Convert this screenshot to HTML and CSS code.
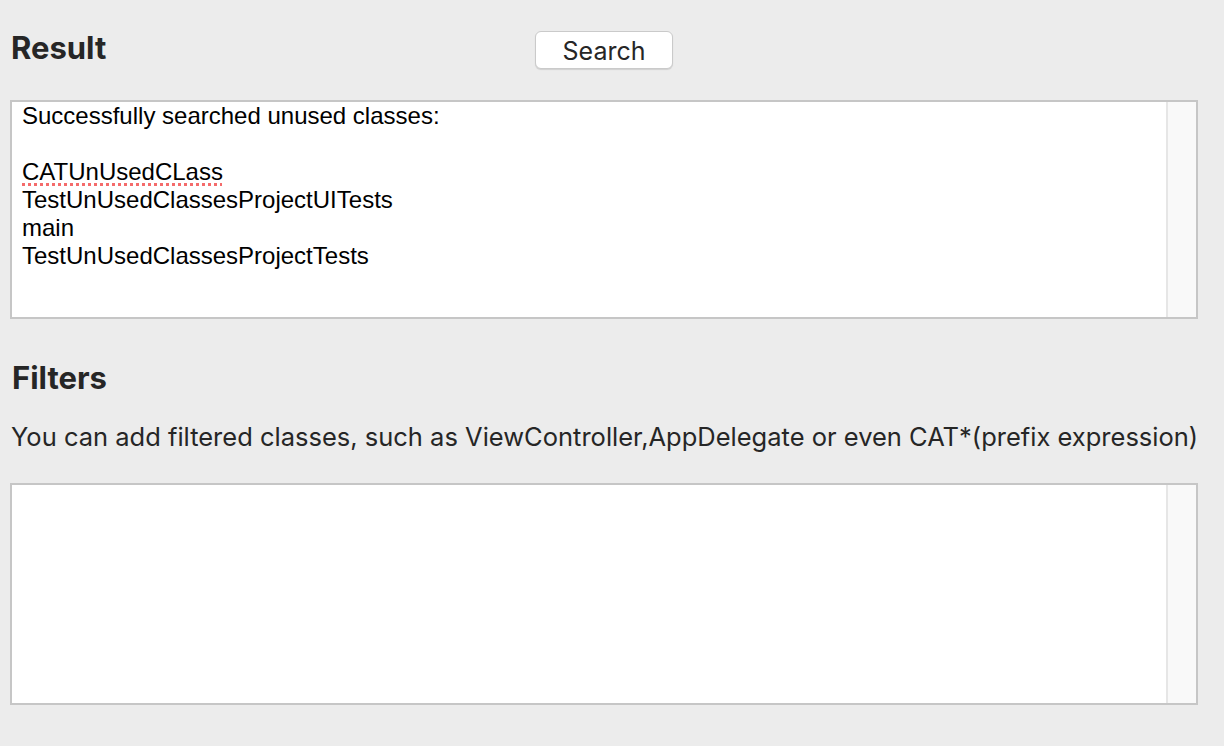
FILE: index.html
```html
<!DOCTYPE html>
<html>
<head>
<meta charset="utf-8">
<link rel="stylesheet" href="styles.css">
</head>
<body>
<div class="page">
  <div class="header">
    <h2 class="title">Result</h2>
    <button class="btn">Search</button>
  </div>
  <div class="box box-result">
    <div class="box-text">Successfully searched unused classes:<br><br><span class="misspelled">CATUnUsedCLass</span><br>TestUnUsedClassesProjectUITests<br>main<br>TestUnUsedClassesProjectTests</div>
    <div class="scroll"></div>
  </div>
  <h2 class="title title-filters">Filters</h2>
  <p class="desc">You can add filtered classes, such as ViewController,AppDelegate or even CAT*(prefix expression)</p>
  <div class="box box-filter">
    <div class="box-text"></div>
    <div class="scroll"></div>
  </div>
</div>
</body>
</html>
```

FILE: styles.css
```css
html, body {
  margin: 0;
  padding: 0;
  background: #ececec;
}

body {
  font-family: Inter, "Noto Sans", sans-serif;
  color: #262626;
}

.page {
  width: 1188px;
  margin-left: 10px;
}

.header {
  display: grid;
  grid-template-columns: 524px 138px;
  height: 100px;
  box-sizing: border-box;
  padding-top: 28px;
  padding-left: 1px;
  align-items: start;
}

.title {
  margin: 0;
  font-weight: 700;
  font-size: 31px;
  line-height: 40px;
  color: #262626;
}

.btn {
  margin-top: 3px;
  height: 38px;
  border: 1px solid #cacaca;
  border-radius: 6px;
  background: #ffffff;
  box-shadow: 0 1px 1px rgba(0, 0, 0, 0.12);
  font-family: Inter, "Noto Sans", sans-serif;
  font-size: 25px;
  line-height: 36px;
  padding: 1px 0 0 0;
  color: #262626;
}

.box {
  display: flex;
  box-sizing: border-box;
  border: 2px solid #c6c6c6;
  background: #ffffff;
}

.box-result {
  height: 219px;
}

.box-filter {
  height: 222px;
  margin-top: 30px;
}

.box-text {
  flex: 1;
  padding-left: 10px;
  font-family: "Liberation Sans", Arial, sans-serif;
  font-size: 24px;
  line-height: 28px;
  color: #000000;
}

.misspelled {
  text-decoration-line: underline;
  text-decoration-style: dotted;
  text-decoration-color: #f46b6b;
  text-decoration-thickness: 3px;
  text-underline-offset: 3px;
}

.scroll {
  width: 30px;
  box-sizing: border-box;
  border-left: 2px solid #e6e6e6;
  background: #f9f9f9;
}

.title-filters {
  margin-top: 39px;
  padding-left: 2px;
}

.desc {
  margin: 23px 0 0 1px;
  font-size: 25.5px;
  line-height: 32px;
  color: #262626;
  white-space: nowrap;
}
```
